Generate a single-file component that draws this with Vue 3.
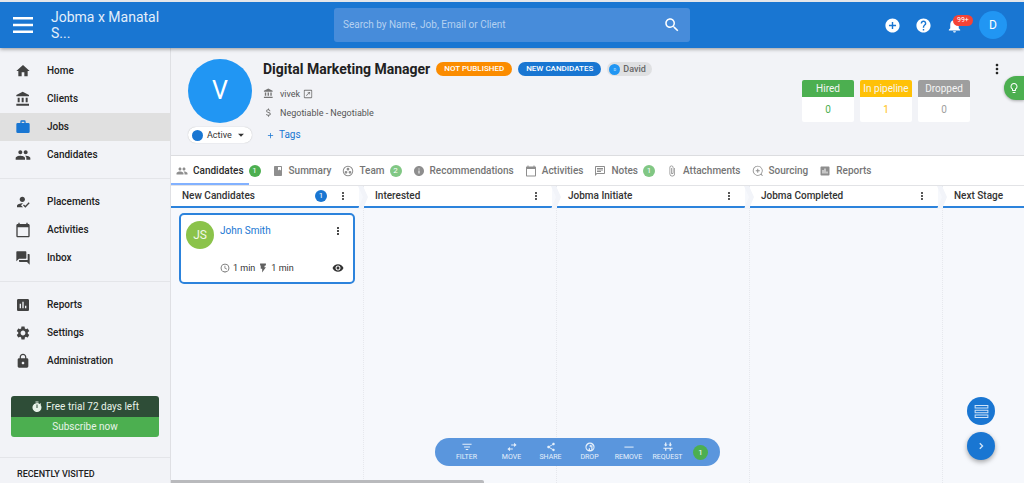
<script setup>
import { h } from 'vue'

const paths = {
  menu: 'M2 4h20v2.4H2zM2 10.8h20v2.4H2zM2 17.6h20V20H2z',
  home: 'M10 20v-6h4v6h5v-8h3L12 3 2 12h3v8z',
  bank: 'M4 10v7h3v-7H4zm6 0v7h3v-7h-3zM2 22h19v-3H2v3zm14-12v7h3v-7h-3zm-4.5-9L2 6v2h19V6l-9.5-5z',
  briefcase: 'M10 2h4a2 2 0 0 1 2 2v2h4a2 2 0 0 1 2 2v11a2 2 0 0 1-2 2H4a2 2 0 0 1-2-2V8a2 2 0 0 1 2-2h4V4a2 2 0 0 1 2-2m4 4V4h-4v2h4z',
  people: 'M16 11c1.66 0 2.99-1.34 2.99-3S17.66 5 16 5c-1.66 0-3 1.34-3 3s1.34 3 3 3zm-8 0c1.66 0 2.99-1.34 2.99-3S9.66 5 8 5C6.34 5 5 6.34 5 8s1.34 3 3 3zm0 2c-2.33 0-7 1.17-7 3.5V19h14v-2.5c0-2.33-4.67-3.5-7-3.5zm8 0c-.29 0-.62.02-.97.05 1.16.84 1.97 1.97 1.97 3.45V19h6v-2.5c0-2.33-4.67-3.5-7-3.5z',
  placed: 'M9 17l3-2.94c-.39-.04-.68-.06-1-.06-2.67 0-8 1.34-8 4v2h9l-3-3zm2-5c2.21 0 4-1.79 4-4s-1.79-4-4-4-4 1.79-4 4 1.79 4 4 4zM15.47 20.5L12 17l1.4-1.41 2.07 2.08 5.13-5.17 1.4 1.41z',
  calendar: 'M20 3h-1V1h-2v2H7V1H5v2H4c-1.1 0-2 .9-2 2v16c0 1.1.9 2 2 2h16c1.1 0 2-.9 2-2V5c0-1.1-.9-2-2-2zm0 18H4V8h16v13z',
  forum: 'M21 6h-2v9H6v2c0 .55.45 1 1 1h11l4 4V7c0-.55-.45-1-1-1zm-4 6V3c0-.55-.45-1-1-1H3c-.55 0-1 .45-1 1v14l4-4h10c.55 0 1-.45 1-1z',
  chart: 'M19 3H5c-1.1 0-2 .9-2 2v14c0 1.1.9 2 2 2h14c1.1 0 2-.9 2-2V5c0-1.1-.9-2-2-2zM9 17H7v-7h2v7zm4 0h-2V7h2v10zm4 0h-2v-4h2v4z',
  gear: 'M19.14 12.94c.04-.3.06-.61.06-.94 0-.32-.02-.64-.07-.94l2.03-1.58c.18-.14.23-.41.12-.61l-1.92-3.32c-.12-.22-.37-.29-.59-.22l-2.39.96c-.5-.38-1.03-.7-1.62-.94l-.36-2.54c-.04-.24-.24-.41-.48-.41h-3.84c-.24 0-.43.17-.47.41l-.36 2.54c-.59.24-1.13.57-1.62.94l-2.39-.96c-.22-.08-.47 0-.59.22L2.74 8.87c-.12.21-.08.47.12.61l2.03 1.58c-.05.3-.09.63-.09.94s.02.64.07.94l-2.03 1.58c-.18.14-.23.41-.12.61l1.92 3.32c.12.22.37.29.59.22l2.39-.96c.5.38 1.03.7 1.62.94l.36 2.54c.05.24.24.41.48.41h3.84c.24 0 .44-.17.47-.41l.36-2.54c.59-.24 1.13-.56 1.62-.94l2.39.96c.22.08.47 0 .59-.22l1.92-3.32c.12-.22.07-.47-.12-.61l-2.01-1.58zM12 15.6c-1.98 0-3.6-1.62-3.6-3.6s1.62-3.6 3.6-3.6 3.6 1.62 3.6 3.6-1.62 3.6-3.6 3.6z',
  lock: 'M18 8h-1V6c0-2.76-2.24-5-5-5S7 3.24 7 6v2H6c-1.1 0-2 .9-2 2v10c0 1.1.9 2 2 2h12c1.1 0 2-.9 2-2V10c0-1.1-.9-2-2-2zm-6 9c-1.1 0-2-.9-2-2s.9-2 2-2 2 .9 2 2-.9 2-2 2zm3.1-9H8.9V6c0-1.71 1.39-3.1 3.1-3.1s3.1 1.39 3.1 3.1v2z',
  timer: 'M15 1H9v2h6V1zM19.03 7.39l1.42-1.42c-.45-.51-.9-.97-1.41-1.41L17.62 6A9 9 0 1 0 21 13c0-2.12-.74-4.07-1.97-5.61zM13 14h-2V7h2v7z',
  search: 'M15.5 14h-.79l-.28-.27C15.41 12.59 16 11.11 16 9.5 16 5.91 13.09 3 9.5 3S3 5.91 3 9.5 5.91 16 9.5 16c1.61 0 3.09-.59 4.23-1.57l.27.28v.79l5 4.99L20.49 19l-4.99-5zm-6 0C7.01 14 5 11.99 5 9.5S7.01 5 9.5 5 14 7.01 14 9.5 11.99 14 9.5 14z',
  addCircle: 'M12 2C6.48 2 2 6.48 2 12s4.48 10 10 10 10-4.48 10-10S17.52 2 12 2zm5 11h-4v4h-2v-4H7v-2h4V7h2v4h4v2z',
  help: 'M12 2C6.48 2 2 6.48 2 12s4.48 10 10 10 10-4.48 10-10S17.52 2 12 2zm1 17h-2v-2h2v2zm2.07-7.75l-.9.92C13.45 12.9 13 13.5 13 15h-2v-.5c0-1.1.45-2.1 1.17-2.83l1.24-1.26c.37-.36.59-.86.59-1.41 0-1.1-.9-2-2-2s-2 .9-2 2H8c0-2.21 1.79-4 4-4s4 1.79 4 4c0 .88-.36 1.68-.93 2.25z',
  bell: 'M12 22c1.1 0 2-.9 2-2h-4c0 1.1.89 2 2 2zm6-6v-5c0-3.07-1.64-5.64-4.5-6.32V4c0-.83-.67-1.5-1.5-1.5s-1.5.67-1.5 1.5v.68C7.63 5.36 6 7.92 6 11v5l-2 2v1h16v-1l-2-2z',
  dots: 'M12 8c1.1 0 2-.9 2-2s-.9-2-2-2-2 .9-2 2 .9 2 2 2zm0 2c-1.1 0-2 .9-2 2s.9 2 2 2 2-.9 2-2-.9-2-2-2zm0 6c-1.1 0-2 .9-2 2s.9 2 2 2 2-.9 2-2-.9-2-2-2z',
  bulb: 'M9 21c0 .55.45 1 1 1h4c.55 0 1-.45 1-1v-1H9v1zm3-19C8.14 2 5 5.14 5 9c0 2.38 1.19 4.47 3 5.74V17c0 .55.45 1 1 1h6c.55 0 1-.45 1-1v-2.26c1.81-1.27 3-3.36 3-5.74 0-3.86-3.14-7-7-7zm2.85 11.1l-.85.6V16h-4v-2.3l-.85-.6C7.8 12.16 7 10.63 7 9c0-2.76 2.24-5 5-5s5 2.24 5 5c0 1.63-.8 3.16-2.15 4.1z',
  open: 'M4 2h16a2 2 0 0 1 2 2v16a2 2 0 0 1-2 2H4a2 2 0 0 1-2-2V4a2 2 0 0 1 2-2zm0 2v16h16V4H4zm7 3h6v6h-1.6V9.8l-7 7-1.2-1.2 7-7H11z',
  dollar: 'M11.8 10.9c-2.27-.59-3-1.2-3-2.15 0-1.09 1.01-1.85 2.7-1.85 1.78 0 2.44.85 2.5 2.1h2.21c-.07-1.72-1.12-3.3-3.21-3.81V3h-2v2.16c-1.94.42-4 1.68-4 3.61 0 2.31 1.91 3.46 4.7 4.13 2.5.6 3 1.48 3 2.41 0 .69-.49 1.79-2.7 1.79-2.06 0-2.87-.92-2.98-2.1h-2.2c.12 2.19 1.76 3.42 4.18 3.83V21h2v-2.15c1.95-.37 4-1.5 4-3.55 0-2.84-2.93-3.81-5.2-4.4z',
  caret: 'M5 9l7 7 7-7z',
  plus: 'M19 13h-6v6h-2v-6H5v-2h6V5h2v6h6v2z',
  book: 'M18 2H6c-1.1 0-2 .9-2 2v16c0 1.1.9 2 2 2h12c1.1 0 2-.9 2-2V4c0-1.1-.9-2-2-2zm-6 2h6v7l-3-2-3 2z',
  team: 'M12 1.5a10.5 10.5 0 1 0 0 21 10.5 10.5 0 0 0 0-21zm0 2a8.5 8.5 0 1 1 0 17 8.5 8.5 0 0 1 0-17zM12 5.5a2.8 2.8 0 1 0 0 5.6 2.8 2.8 0 0 0 0-5.6zM8 11.8a2.8 2.8 0 1 0 0 5.6 2.8 2.8 0 0 0 0-5.6zm8 0a2.8 2.8 0 1 0 0 5.6 2.8 2.8 0 0 0 0-5.6z',
  info: 'M12 2C6.48 2 2 6.48 2 12s4.48 10 10 10 10-4.48 10-10S17.52 2 12 2zm1 15h-2v-6h2v6zm0-8h-2V7h2v2z',
  note: 'M20 2H4c-1.1 0-2 .9-2 2v18l4-4h14c1.1 0 2-.9 2-2V4c0-1.1-.9-2-2-2zM20 16H5.2L4 17.2V4h16v12zM6 12h8v2H6v-2zM6 9h12v2H6V9zm0-3h12v2H6V6z',
  clip: 'M16.5 6v11.5c0 2.21-1.79 4-4 4s-4-1.79-4-4V5c0-1.38 1.12-2.5 2.5-2.5s2.5 1.12 2.5 2.5v10.5c0 .55-.45 1-1 1s-1-.45-1-1V6H10v9.5c0 1.38 1.12 2.5 2.5 2.5s2.5-1.12 2.5-2.5V5c0-2.21-1.79-4-4-4S7 2.79 7 5v12.5c0 3.04 2.46 5.5 5.5 5.5s5.5-2.46 5.5-5.5V6h-1.5z',
  sourcing: 'M11.5 1.5a10 10 0 1 0 6 18l3 2.5 1.2-1.2-2.7-2.9A10 10 0 0 0 11.5 1.5zm0 1.7a8.3 8.3 0 1 1 0 16.6 8.3 8.3 0 0 1 0-16.6zm-1 4.3v3h-3v2h3v3h2v-3h3v-2h-3v-3z',
  clock: 'M12 1.5a10.5 10.5 0 1 0 0 21 10.5 10.5 0 0 0 0-21zm0 2a8.5 8.5 0 1 1 0 17 8.5 8.5 0 0 1 0-17zM11 6.5h1.7v5.3l4.3 2.6-.9 1.4-5.1-3.1z',
  flash: 'M5 1h14v5h-2.5L15 10h4l-9 13v-9H6.5V6H5z',
  eye: 'M12 4.5C7 4.5 2.73 7.61 1 12c1.73 4.39 6 7.5 11 7.5s9.27-3.11 11-7.5c-1.73-4.39-6-7.5-11-7.5zM12 17c-2.76 0-5-2.24-5-5s2.24-5 5-5 5 2.24 5 5-2.24 5-5 5zm0-8c-1.66 0-3 1.34-3 3s1.34 3 3 3 3-1.34 3-3-1.34-3-3-3z',
  filter: 'M1 4h22v2.4H1zM5 10.5h14v2.4H5zM9 17h6v2.4H9z',
  move: 'M17 2l6 5-6 5V8.2h-7V5.8h7zM7 12v3.8h7v2.4H7V22l-6-5z',
  share: 'M18 16.08c-.76 0-1.44.3-1.96.77L8.91 12.7c.05-.23.09-.46.09-.7s-.04-.47-.09-.7l7.05-4.11c.54.5 1.25.81 2.04.81 1.66 0 3-1.34 3-3s-1.34-3-3-3-3 1.34-3 3c0 .24.04.47.09.7L8.04 9.81C7.5 9.31 6.79 9 6 9c-1.66 0-3 1.34-3 3s1.34 3 3 3c.79 0 1.5-.31 2.04-.81l7.12 4.16c-.05.21-.08.43-.08.65 0 1.61 1.31 2.92 2.92 2.92 1.61 0 2.92-1.31 2.92-2.92s-1.31-2.92-2.92-2.92z',
  drop: 'M12 1a11 11 0 1 0 0 22 11 11 0 0 0 0-22zM6 18a8 8 0 1 1 12 0v-7a3 3 0 0 0-3-3h-1V6l-4 3.5 4 3.5v-2h1v8h-3v-4H9v4z',
  minus: 'M1 11h22v2.4H1z',
  request: 'M5 1h3v5h3L6.5 11 2 6h3zM16 1h3v5h3l-4.5 5L13 6h3zM1 14h22v2.2H1zM5 16.2h3V21H5zM16 16.2h3V21h-3z',
  rows: 'M1 1.5h22v5.6H1zM2.6 3.1v2.4h18.8V3.1zM1 9.2h22v5.6H1zM2.6 10.8v2.4h18.8v-2.4zM1 16.9h22v5.6H1zM2.6 18.5v2.4h18.8v-2.4z',
  next: 'M8.6 16.6L13.2 12 8.6 7.4 10.5 5.5l6.5 6.5-6.5 6.5z',
}

const Icon = (props) =>
  h('svg', { width: props.size, height: props.size, viewBox: '0 0 24 24', fill: 'currentColor', 'fill-rule': 'evenodd', 'aria-hidden': 'true' }, [
    h('path', { d: paths[props.name] }),
  ])
Icon.props = ['name', 'size']

const groups = [
  [
    { label: 'Home', icon: 'home' },
    { label: 'Clients', icon: 'bank' },
    { label: 'Jobs', icon: 'briefcase', active: true },
    { label: 'Candidates', icon: 'people' },
  ],
  [
    { label: 'Placements', icon: 'placed' },
    { label: 'Activities', icon: 'calendar' },
    { label: 'Inbox', icon: 'forum' },
  ],
  [
    { label: 'Reports', icon: 'chart' },
    { label: 'Settings', icon: 'gear' },
    { label: 'Administration', icon: 'lock' },
  ],
]

const stats = [
  { label: 'Hired', value: 0, tone: 'hired' },
  { label: 'In pipeline', value: 1, tone: 'pipeline' },
  { label: 'Dropped', value: 0, tone: 'dropped' },
]

const tabs = [
  { label: 'Candidates', icon: 'people', count: 1, active: true },
  { label: 'Summary', icon: 'book' },
  { label: 'Team', icon: 'team', count: 2 },
  { label: 'Recommendations', icon: 'info' },
  { label: 'Activities', icon: 'calendar' },
  { label: 'Notes', icon: 'note', count: 1 },
  { label: 'Attachments', icon: 'clip' },
  { label: 'Sourcing', icon: 'sourcing' },
  { label: 'Reports', icon: 'chart' },
]

const columns = [
  { title: 'New Candidates', count: 1, cards: [{ name: 'John Smith', initials: 'JS', added: '1 min', active: '1 min' }] },
  { title: 'Interested', cards: [] },
  { title: 'Jobma Initiate', cards: [] },
  { title: 'Jobma Completed', cards: [] },
  { title: 'Next Stage', cards: [] },
]

const actions = [
  { label: 'FILTER', icon: 'filter' },
  { label: 'MOVE', icon: 'move' },
  { label: 'SHARE', icon: 'share' },
  { label: 'DROP', icon: 'drop' },
  { label: 'REMOVE', icon: 'minus' },
  { label: 'REQUEST', icon: 'request' },
]
</script>

<template>
  <div class="app">
    <header class="topbar">
      <div class="brand">
        <button class="plain" aria-label="Menu"><Icon name="menu" size="24" /></button>
        <div class="brand-name">Jobma x Manatal<br />S...</div>
      </div>
      <form class="search" @submit.prevent>
        <input type="search" placeholder="Search by Name, Job, Email or Client" aria-label="Search" />
        <button class="plain" aria-label="Search"><Icon name="search" size="18" /></button>
      </form>
      <div class="tools">
        <button class="plain" aria-label="Add"><Icon name="addCircle" size="17" /></button>
        <button class="plain" aria-label="Help"><Icon name="help" size="17" /></button>
        <button class="plain bell" aria-label="Notifications"><Icon name="bell" size="17" /><span class="alert">99+</span></button>
        <button class="plain user">D</button>
      </div>
    </header>

    <div class="body">
      <aside class="sidebar">
        <nav>
          <ul v-for="(group, i) in groups" :key="i" class="group">
            <li v-for="item in group" :key="item.label">
              <a href="#" class="nav-item" :class="{ active: item.active }"><Icon :name="item.icon" size="16" />{{ item.label }}</a>
            </li>
          </ul>
        </nav>
        <div class="trial">
          <div class="trial-left"><Icon name="timer" size="12" />Free trial 72 days left</div>
          <button class="subscribe">Subscribe now</button>
        </div>
        <h2 class="recent">RECENTLY VISITED</h2>
      </aside>

      <main class="main">
        <section class="hero">
          <div class="identity">
            <div class="job-avatar">V</div>
            <button class="status"><span class="status-dot"></span>Active<Icon name="caret" size="10" /></button>
          </div>
          <div class="details">
            <div class="title-row">
              <h1>Digital Marketing Manager</h1>
              <span class="chip orange">NOT PUBLISHED</span>
              <span class="chip blue">NEW CANDIDATES</span>
              <span class="chip owner"><span class="owner-dot">D</span>David</span>
            </div>
            <div class="meta"><Icon name="bank" size="11" /><a href="#">vivek</a><Icon class="open" name="open" size="10" /></div>
            <div class="meta"><Icon name="dollar" size="11" />Negotiable - Negotiable</div>
            <button class="plain tags"><Icon name="plus" size="9" />Tags</button>
          </div>
          <div class="stats">
            <div v-for="s in stats" :key="s.label" class="stat" :class="s.tone">
              <div class="stat-label">{{ s.label }}</div>
              <div class="stat-value">{{ s.value }}</div>
            </div>
          </div>
          <button class="plain hero-more" aria-label="More"><Icon name="dots" size="16" /></button>
          <button class="plain hint" aria-label="Tips"><Icon name="bulb" size="12" /></button>
        </section>

        <nav class="tabs">
          <a v-for="t in tabs" :key="t.label" href="#" class="tab" :class="{ active: t.active }">
            <Icon :name="t.icon" size="12" /><span>{{ t.label }}</span><span v-if="t.count" class="count">{{ t.count }}</span>
          </a>
        </nav>

        <section class="board">
          <div v-for="c in columns" :key="c.title" class="column">
            <header class="column-head">
              <h3>{{ c.title }}</h3>
              <span v-if="c.count" class="column-count">{{ c.count }}</span>
              <button class="plain" :aria-label="c.title + ' options'"><Icon name="dots" size="12" /></button>
              <svg class="chevron" width="10" height="23" viewBox="0 0 10 23" aria-hidden="true"><path d="M0 0h5l5 11-5 12H0l5-12z" /></svg>
            </header>
            <article v-for="p in c.cards" :key="p.name" class="card">
              <div class="card-avatar">{{ p.initials }}</div>
              <a href="#" class="card-name">{{ p.name }}</a>
              <button class="plain card-more" aria-label="Candidate options"><Icon name="dots" size="12" /></button>
              <div class="card-times">
                <Icon name="clock" size="10" />{{ p.added }}
                <Icon name="flash" size="10" />{{ p.active }}
              </div>
              <button class="plain eye" aria-label="Preview"><Icon name="eye" size="12" /></button>
            </article>
          </div>
        </section>

        <div class="actions">
          <button v-for="a in actions" :key="a.label" class="plain action"><Icon :name="a.icon" size="10" />{{ a.label }}</button>
          <span class="selected">1</span>
        </div>
        <div class="fabs">
          <button class="plain fab" aria-label="Compact view"><Icon name="rows" size="15" /></button>
          <button class="plain fab raised" aria-label="Next"><Icon name="next" size="12" /></button>
        </div>
        <div class="scrollbar"></div>
      </main>
    </div>
  </div>
</template>

<style>
body {
  margin: 0;
  background: #f2f3f7;
}
</style>

<style scoped>
.app {
  display: flex;
  flex-direction: column;
  height: 100vh;
  overflow: hidden;
  font-family: Roboto, "Liberation Sans", sans-serif;
  font-size: 10px;
  line-height: 12px;
  color: #212121;
}
.app * { box-sizing: border-box; }
svg { display: block; flex: none; }
a { color: inherit; text-decoration: none; }
h1, h2, h3, ul { margin: 0; padding: 0; list-style: none; }
button { font: inherit; cursor: pointer; }
.plain {
  display: flex;
  align-items: center;
  justify-content: center;
  padding: 0;
  border: 0;
  background: none;
  color: inherit;
}

.topbar {
  position: relative;
  z-index: 2;
  display: grid;
  grid-template-columns: 1fr minmax(200px, 356px) 1fr;
  align-items: center;
  flex: none;
  height: 48px;
  border-top: 2px solid #e4e6ea;
  background: #1976d2;
  color: #fff;
  box-shadow: 0 1px 4px rgba(0, 0, 0, 0.4);
}
.brand { display: flex; align-items: center; gap: 16px; padding-left: 11px; }
.brand-name { font-size: 14px; line-height: 16px; color: #e3eefa; }
.search {
  display: flex;
  align-items: center;
  height: 34px;
  padding: 0 9px;
  border-radius: 3px;
  background: #478cda;
}
.search input {
  flex: 1;
  min-width: 0;
  padding: 0;
  border: 0;
  outline: 0;
  background: none;
  color: #fff;
  font: inherit;
}
.search input::placeholder { color: #b5d1f1; opacity: 1; }
.tools { display: flex; align-items: center; justify-content: flex-end; gap: 14px; padding-right: 17px; }
.bell { position: relative; }
.alert {
  position: absolute;
  left: 7px;
  top: -2px;
  padding: 0 4px;
  border-radius: 6px;
  background: #f44336;
  font-size: 7px;
  line-height: 11px;
}
.user { width: 28px; height: 28px; margin-left: 2px; border-radius: 50%; background: #2196f3; font-size: 12px; }

.body { display: flex; flex: 1; min-height: 0; }
.sidebar {
  flex: none;
  width: 171px;
  border-right: 1px solid #dfe0e4;
  background: #f2f3f7;
  overflow: hidden;
}
.group { padding: 9px 0; border-bottom: 1px solid #e4e5e9; }
.group:last-child { border-bottom: 0; }
.nav-item {
  display: flex;
  align-items: center;
  gap: 16px;
  height: 28px;
  padding-left: 15px;
  font-weight: 500;
}
.nav-item svg { color: #424242; }
.nav-item.active { background: #e0e0e0; }
.nav-item.active svg { color: #1976d2; }
.trial { margin: 12px 11px 20px; border-radius: 3px; overflow: hidden; color: #e8f3e9; }
.trial-left {
  display: flex;
  align-items: center;
  justify-content: center;
  gap: 3px;
  height: 21px;
  background: #2e4d37;
}
.subscribe { display: block; width: 100%; height: 20px; padding: 0; border: 0; background: #4caf50; color: inherit; }
.recent { padding: 10px 17px; border-top: 1px solid #e4e5e9; font-size: 9px; line-height: 12px; font-weight: 500; }

.main { position: relative; display: flex; flex-direction: column; flex: 1; min-width: 0; }
.hero {
  position: relative;
  display: flex;
  align-items: flex-start;
  flex: none;
  padding: 11px 19px 11px 17px;
  border-bottom: 1px solid #dcdde0;
  background: #f2f3f7;
}
.identity { flex: none; width: 64px; margin-right: 11px; }
.job-avatar {
  height: 64px;
  border-radius: 50%;
  background: #2196f3;
  color: #fff;
  font-size: 25px;
  line-height: 64px;
  text-align: center;
}
.status {
  display: flex;
  align-items: center;
  gap: 4px;
  width: 100%;
  height: 16px;
  margin-top: 4px;
  padding: 0 4px;
  border: 0;
  border-radius: 8px;
  background: #fff;
  color: #333;
  font-size: 9px;
  box-shadow: 0 0 1px rgba(0, 0, 0, 0.3);
}
.status-dot { width: 11px; height: 11px; border-radius: 50%; background: #1976d2; }
.details { flex: 1; min-width: 0; font-size: 9px; }
.title-row { display: flex; align-items: center; gap: 6px; height: 20px; margin-bottom: 5px; white-space: nowrap; }
h1 { font-size: 14px; line-height: 20px; font-weight: 700; }
.chip { height: 14px; padding: 0 8px; border-radius: 7px; font-size: 8px; line-height: 14px; font-weight: 500; color: #fff; }
.orange { background: #fb8c00; }
.blue { background: #1976d2; }
.owner { display: flex; align-items: center; gap: 3px; padding: 0 6px 0 2px; background: #dfe0e2; color: #666; font-size: 9px; }
.owner-dot { width: 11px; height: 11px; border-radius: 50%; background: #2196f3; color: #bbdefb; font-size: 4px; line-height: 11px; text-align: center; }
.meta { display: flex; align-items: center; gap: 6px; height: 19px; color: #555; }
.meta svg { color: #757575; }
.meta .open { margin-left: -3px; }
.tags { gap: 4px; height: 18px; margin: 4px 0 0 3px; color: #1976d2; font-size: 10px; }
.stats { display: flex; gap: 6px; margin: 21px 19px 0 0; }
.stat { width: 52px; border-radius: 2px; overflow: hidden; background: #fff; text-align: center; }
.stat-label { color: #f5f5f5; line-height: 17px; white-space: nowrap; }
.stat-value { line-height: 25px; }
.hired .stat-label { background: #4caf50; }
.hired .stat-value { color: #4caf50; }
.pipeline .stat-label { background: #ffc107; }
.pipeline .stat-value { color: #ffc107; }
.dropped .stat-label { background: #9e9e9e; }
.dropped .stat-value { color: #9e9e9e; }
.hero-more { margin-top: 2px; }
.hint {
  position: absolute;
  right: 0;
  top: 28px;
  width: 20px;
  height: 24px;
  border-radius: 12px 0 0 12px;
  background: #4caf50;
  color: #fff;
  box-shadow: 0 1px 3px rgba(0, 0, 0, 0.3);
}

.tabs {
  display: flex;
  align-items: center;
  gap: 11px;
  flex: none;
  height: 30px;
  padding-left: 5px;
  border-bottom: 1px solid #e2e3e6;
  background: #fff;
}
.tab { position: relative; display: flex; align-items: center; gap: 5px; height: 29px; font-weight: 500; color: #757575; white-space: nowrap; }
.tab svg { color: #8e8e8e; }
.tab.active { color: #2b2b2b; }
.tab.active::after {
  content: "";
  position: absolute;
  left: -5px;
  right: 12px;
  bottom: 0;
  height: 2px;
  background: #82b1ff;
}
.count, .column-count, .selected { border-radius: 50%; color: #fff; text-align: center; font-weight: 400; }
.count { width: 12px; height: 12px; background: #81c784; font-size: 8px; line-height: 12px; }
.tab.active .count { background: #4caf50; }

.board { display: flex; flex: 1; min-height: 0; overflow: hidden; background: #f6f8fc; }
.column { flex: none; width: 193px; border-right: 1px dotted #e6e8ed; }
.column-head {
  position: relative;
  display: flex;
  align-items: center;
  gap: 10px;
  height: 22px;
  margin-right: 4px;
  padding: 0 10px 0 11px;
  border-bottom: 2px solid #2c83dc;
  background: #fff;
  color: #333;
}
.column-head h3 { flex: 1; font-size: 10px; font-weight: 500; }
.column-count { width: 12px; height: 12px; background: #1976d2; font-size: 8px; line-height: 12px; }
.chevron { position: absolute; z-index: 1; right: -9px; top: 0; fill: #f2f4f9; }
.card {
  display: grid;
  grid-template-columns: 28px 1fr 12px;
  column-gap: 6px;
  align-items: center;
  margin: 5px 8px 0;
  padding: 6px 9px 3px 5px;
  border: 2px solid #2c83dc;
  border-radius: 5px;
  background: #fff;
}
.card-avatar {
  width: 28px;
  height: 28px;
  grid-row: span 2;
  align-self: start;
  border-radius: 50%;
  background: #8bc34a;
  color: #f1f8e9;
  font-size: 12px;
  line-height: 28px;
  text-align: center;
}
.card-name { height: 22px; line-height: 20px; color: #1976d2; }
.card-more { align-self: start; height: 20px; }
.card-times { display: flex; align-items: center; gap: 3px; height: 36px; padding-top: 14px; font-size: 9px; color: #333; }
.card-times svg { color: #616161; }
.eye { padding-top: 14px; color: #333; }

.actions {
  position: absolute;
  left: 264px;
  bottom: 17px;
  display: flex;
  align-items: center;
  height: 28px;
  padding: 0 12px;
  border-radius: 14px;
  background: #5a96dd;
  color: #e6f0fb;
}
.action { flex-direction: column; gap: 1px; width: 39px; font-size: 7px; line-height: 9px; }
.action:first-child { margin-right: 6px; }
.selected { width: 15px; height: 15px; margin-left: 6px; background: #4caf50; font-size: 8px; line-height: 15px; }
.fabs { position: absolute; right: 29px; bottom: 23px; display: flex; flex-direction: column; gap: 7px; }
.fab { width: 28px; height: 28px; border-radius: 50%; background: #1976d2; color: #cfe3f8; }
.raised { box-shadow: 0 2px 5px rgba(0, 0, 0, 0.35); }
.scrollbar { position: absolute; left: 0; bottom: 0; width: 313px; height: 3px; border-radius: 0 2px 0 0; background: #b9babd; }
</style>
